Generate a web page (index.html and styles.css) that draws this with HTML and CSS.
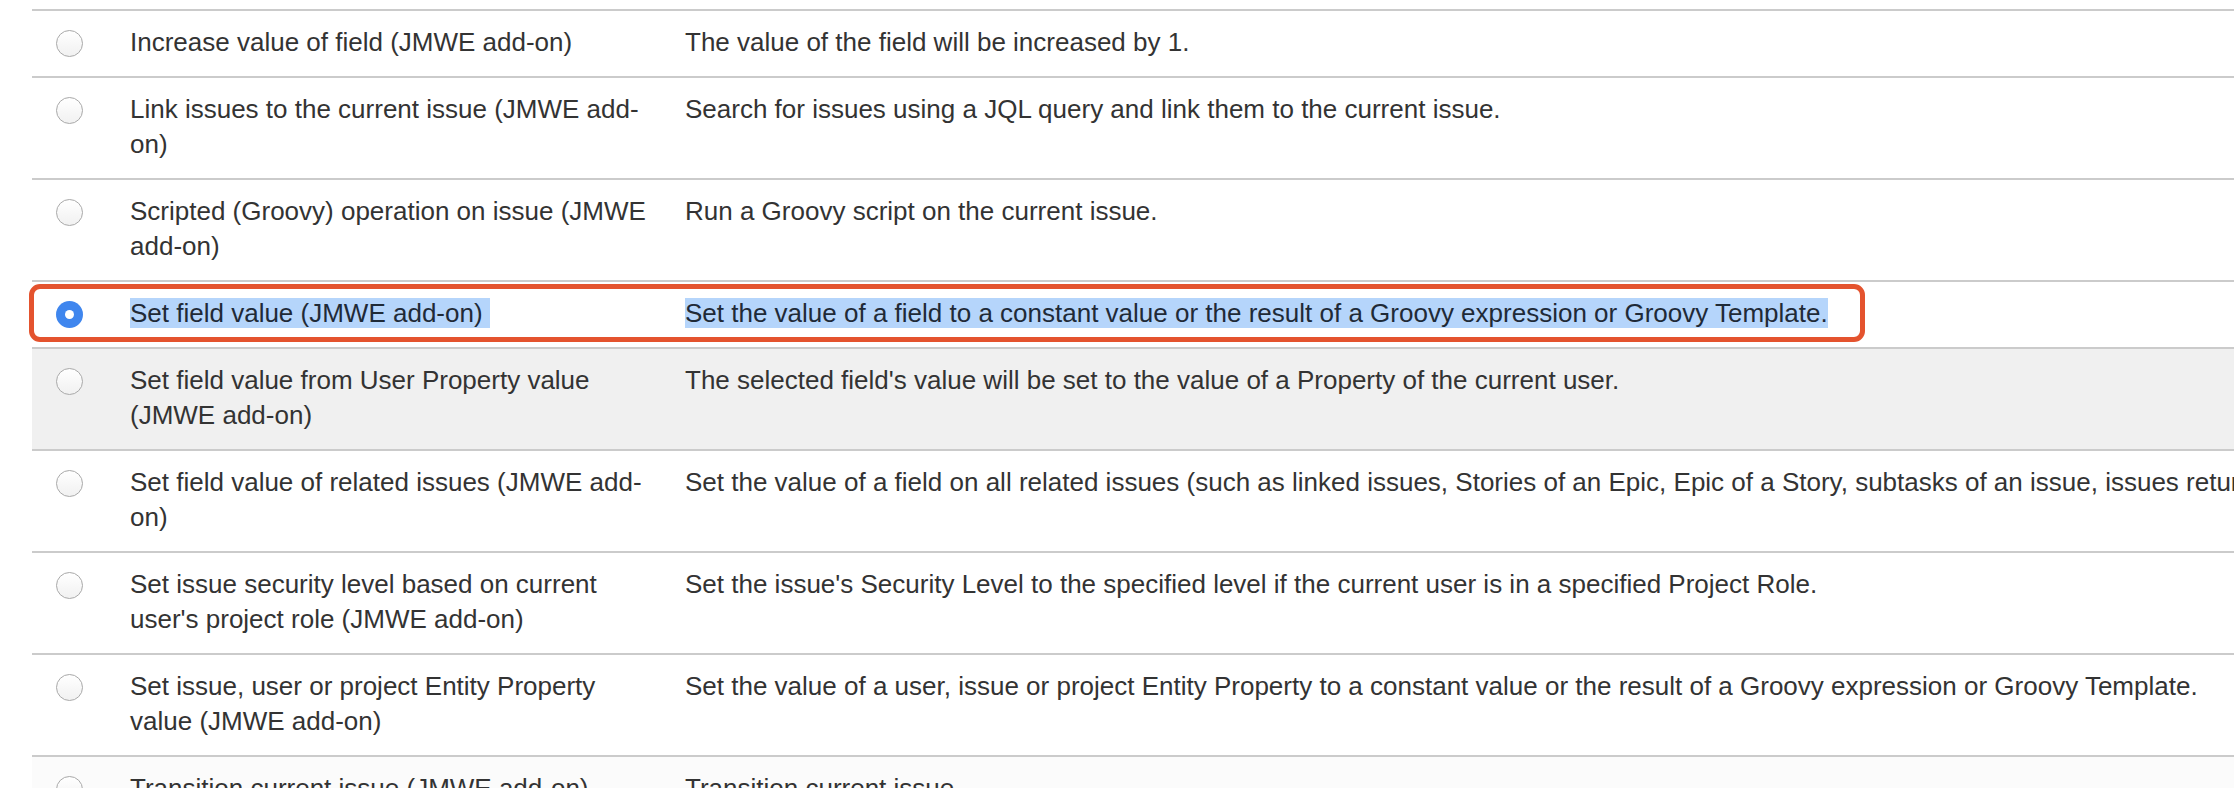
FILE: index.html
```html
<!DOCTYPE html>
<html lang="en">
<head>
<meta charset="utf-8">
<title>Post functions</title>
<link rel="stylesheet" href="styles.css">
</head>
<body>
<div class="page">
  <table class="functions">
    <colgroup>
      <col class="c-radio">
      <col class="c-name">
      <col class="c-desc">
    </colgroup>
    <tbody>
      <tr>
        <td class="radio-cell"><span class="radio"></span></td>
        <td class="name">Increase value of field (JMWE add-on)</td>
        <td class="desc">The value of the field will be increased by 1.</td>
      </tr>
      <tr>
        <td class="radio-cell"><span class="radio"></span></td>
        <td class="name">Link issues to the current issue (JMWE add-on)</td>
        <td class="desc">Search for issues using a JQL query and link them to the current issue.</td>
      </tr>
      <tr>
        <td class="radio-cell"><span class="radio"></span></td>
        <td class="name">Scripted (Groovy) operation on issue (JMWE add-on)</td>
        <td class="desc">Run a Groovy script on the current issue.</td>
      </tr>
      <tr class="selected">
        <td class="radio-cell"><span class="radio checked"></span></td>
        <td class="name"><span class="sel sel-name">Set field value (JMWE add-on)</span></td>
        <td class="desc"><span class="sel">Set the value of a field to a constant value or the result of a Groovy expression or Groovy Template.</span></td>
      </tr>
      <tr class="hover">
        <td class="radio-cell"><span class="radio"></span></td>
        <td class="name">Set field value from User Property value (JMWE add-on)</td>
        <td class="desc">The selected field's value will be set to the value of a Property of the current user.</td>
      </tr>
      <tr>
        <td class="radio-cell"><span class="radio"></span></td>
        <td class="name">Set field value of related issues (JMWE add-on)</td>
        <td class="desc">Set the value of a field on all related issues (such as linked issues, Stories of an Epic, Epic of a Story, subtasks of an issue, issues returned by a JQL search, etc.)</td>
      </tr>
      <tr>
        <td class="radio-cell"><span class="radio"></span></td>
        <td class="name">Set issue security level based on current user's project role (JMWE add-on)</td>
        <td class="desc">Set the issue's Security Level to the specified level if the current user is in a specified Project Role.</td>
      </tr>
      <tr>
        <td class="radio-cell"><span class="radio"></span></td>
        <td class="name">Set issue, user or project Entity Property value (JMWE add-on)</td>
        <td class="desc">Set the value of a user, issue or project Entity Property to a constant value or the result of a Groovy expression or Groovy Template.</td>
      </tr>
      <tr class="faint">
        <td class="radio-cell"><span class="radio"></span></td>
        <td class="name">Transition current issue (JMWE add-on)</td>
        <td class="desc">Transition current issue.</td>
      </tr>
    </tbody>
  </table>
  <div class="annotation"></div>
</div>
</body>
</html>
```
FILE: styles.css
```css
html, body {
  margin: 0;
  padding: 0;
  background: #ffffff;
  overflow: hidden;
}

body {
  font-family: "Liberation Sans", Arial, Helvetica, sans-serif;
  font-size: 26px;
  color: #333333;
}

.page {
  position: relative;
  padding: 9px 0 0 32px;
}

.functions {
  border-collapse: collapse;
  table-layout: fixed;
  width: 2700px;
}

.c-radio { width: 98px; }
.c-name { width: 555px; }

.functions tr {
  border-top: 2px solid #cbcbcb;
}

.functions td {
  padding: 14px 0 16px 0;
  line-height: 35px;
  vertical-align: top;
}

.radio-cell {
  padding-left: 24px !important;
}

.name {
  padding-right: 35px !important;
}

.desc {
  white-space: nowrap;
}

.hover {
  background: #f0f0f0;
}

.faint {
  background: #fbfbfb;
}

.radio {
  display: block;
  box-sizing: border-box;
  width: 27px;
  height: 27px;
  margin-top: 5px;
  border-radius: 50%;
  border: 1.5px solid #a9a9a9;
  background: linear-gradient(#ffffff, #f1f1f1);
}

.radio.checked {
  border: none;
  background: #3f86ee;
  position: relative;
}

.radio.checked::after {
  content: "";
  position: absolute;
  left: 50%;
  top: 50%;
  width: 9px;
  height: 9px;
  margin: -4.5px 0 0 -4.5px;
  border-radius: 50%;
  background: #ffffff;
}

.sel {
  background: #b5d5fb;
  color: #1f2a37;
}

.sel-name {
  padding-right: 7px;
}

.annotation {
  position: absolute;
  left: 29px;
  top: 284px;
  width: 1836px;
  height: 58px;
  box-sizing: border-box;
  border: 5px solid #e4532e;
  border-radius: 11px;
  pointer-events: none;
}
```
